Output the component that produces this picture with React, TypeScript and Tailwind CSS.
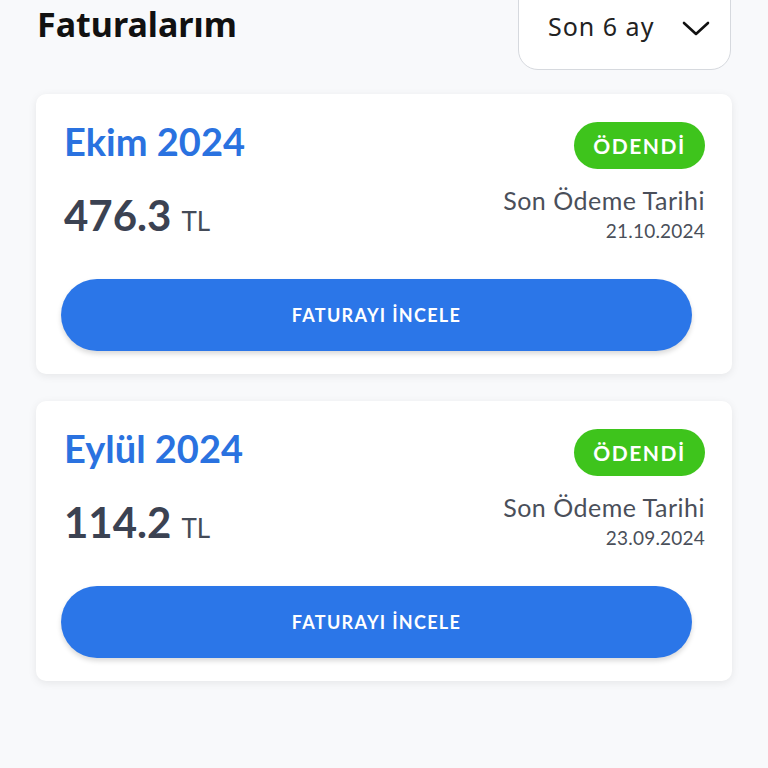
import React from 'react'

type Invoice = {
  month: string
  amount: string
  dueDate: string
}

const invoices: Invoice[] = [
  { month: 'Ekim 2024', amount: '476.3', dueDate: '21.10.2024' },
  { month: 'Eylül 2024', amount: '114.2', dueDate: '23.09.2024' },
]

const geo = { fontFamily: 'Lato, "Noto Sans", sans-serif' }
const noto = { fontFamily: '"Noto Sans", sans-serif' }

const InvoiceCard = ({ invoice }: { invoice: Invoice }) => (
  <div className="bg-white rounded-[10px] shadow-[0_2px_8px_rgba(0,0,0,0.08)] pl-[28px] pr-[27px] pt-[28px] pb-[23px]">
    {/* Month + status */}
    <div className="flex items-start justify-between">
      <h2 className="text-[38px] leading-[38px] font-bold text-[#2a72e0]" style={geo}>
        {invoice.month}
      </h2>
      <span
        className="h-[47px] w-[131px] rounded-full bg-[#3ec41c] text-white text-[21px] leading-[21px] font-bold flex items-center justify-center tracking-[1.5px]"
        style={geo}
      >
        ÖDENDİ
      </span>
    </div>

    {/* Amount + due date */}
    <div className="flex items-center justify-between mt-[19px]">
      <div className="flex items-baseline gap-[10px] text-[#3b4252]" style={geo}>
        <span className="text-[42px] leading-[42px] font-bold">{invoice.amount}</span>
        <span className="text-[26px] leading-[26px] text-[#444b58]">TL</span>
      </div>
      <div className="text-right text-[#4a4f5a]" style={geo}>
        <p className="text-[25px] leading-[24px] tracking-[0.5px]">Son Ödeme Tarihi</p>
        <p className="text-[19px] leading-[22px] mt-[8px] tracking-[0.2px]">{invoice.dueDate}</p>
      </div>
    </div>

    {/* Action */}
    <button
      className="mt-[37px] -ml-[3px] w-[631px] h-[72px] rounded-full bg-[#2b76e8] text-white text-[18px] font-bold shadow-[0_3px_5px_rgba(0,0,0,0.15)] tracking-[1.3px]"
      style={geo}
    >
      FATURAYI İNCELE
    </button>
  </div>
)

export default function App() {
  return (
    <div className="min-h-[768px] bg-[#f8f9fb]">
      {/* Header */}
      <div className="flex justify-between pl-[37px] pr-[37px]">
        <h1 className="pt-[2px] text-[34px] font-bold text-[#111] leading-[44px]" style={noto}>
          Faturalarım
        </h1>
        <div className="-mt-[20px] h-[90px] w-[213px] bg-white border border-[#d6d9de] rounded-b-[20px] rounded-t-none flex items-start justify-between pt-[29px] pl-[29px] pr-[20px]">
          <span className="text-[25px] leading-[32px] tracking-[1px] text-[#222]" style={noto}>
            Son 6 ay
          </span>
          <svg className="mt-[10px]" width="28" height="16" viewBox="0 0 28 16" fill="none" stroke="#111" strokeWidth="2.6" strokeLinecap="round" strokeLinejoin="round">
            <path d="M2 3l12 11 12-11" />
          </svg>
        </div>
      </div>

      {/* Cards */}
      <div className="mt-[24px] px-[36px] flex flex-col gap-[27px]">
        {invoices.map((inv) => (
          <InvoiceCard key={inv.month} invoice={inv} />
        ))}
      </div>
    </div>
  )
}
